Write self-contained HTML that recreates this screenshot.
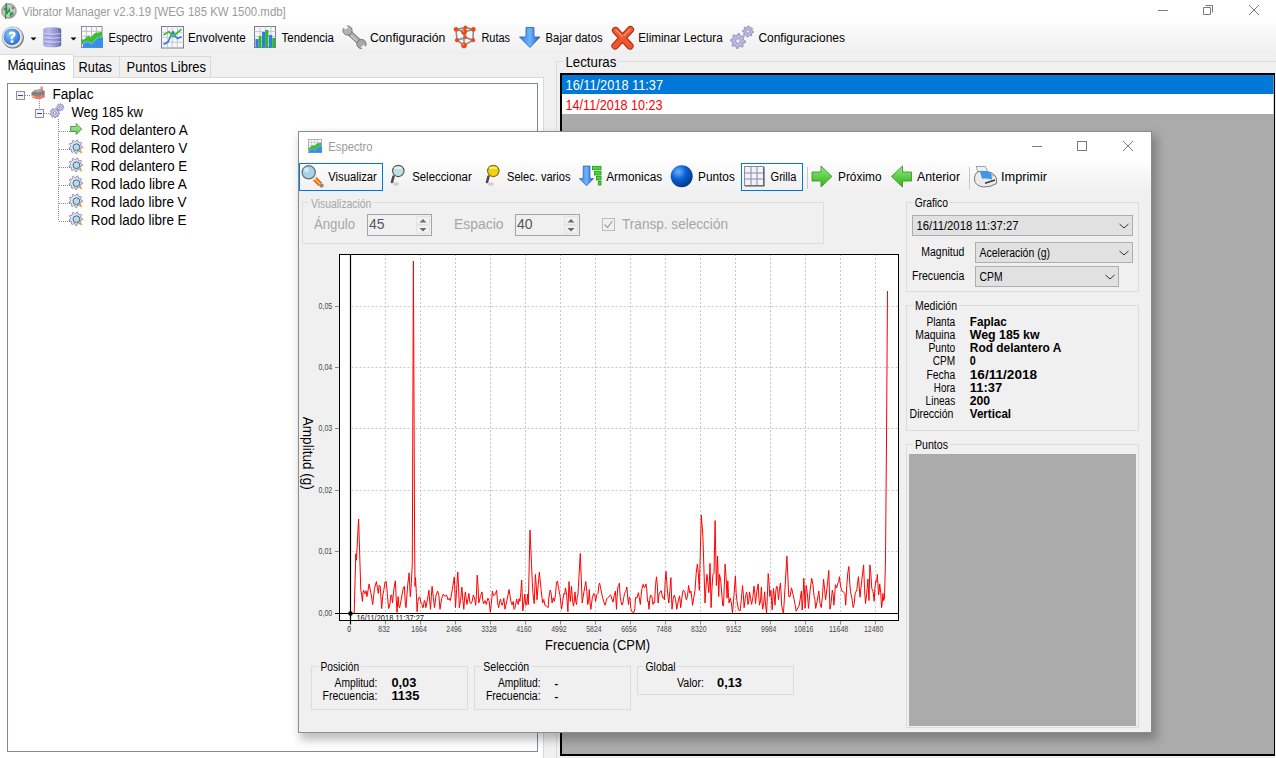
<!DOCTYPE html><html><head><meta charset="utf-8"><style>html,body{margin:0;padding:0;width:1276px;height:758px;overflow:hidden;background:#f0f0f0;position:relative}</style></head><body><svg width="1276" height="758" viewBox="0 0 1276 758" style="position:absolute;left:0;top:0;font-family:'Liberation Sans', sans-serif">
<defs>
<linearGradient id="tbg" x1="0" y1="0" x2="0" y2="1"><stop offset="0" stop-color="#fcfcfc"/><stop offset="1" stop-color="#efefef"/></linearGradient>
<linearGradient id="dtbg" x1="0" y1="0" x2="0" y2="1"><stop offset="0" stop-color="#fdfdfd"/><stop offset="1" stop-color="#efefef"/></linearGradient>
<filter id="shadow" x="-5%" y="-5%" width="110%" height="110%"><feGaussianBlur stdDeviation="5"/></filter>
<radialGradient id="sph" cx="0.35" cy="0.3" r="0.7"><stop offset="0" stop-color="#6fb3ff"/><stop offset="0.5" stop-color="#0a5fd8"/><stop offset="1" stop-color="#033a8c"/></radialGradient>
<radialGradient id="help" cx="0.4" cy="0.35" r="0.65"><stop offset="0" stop-color="#8cc8ff"/><stop offset="1" stop-color="#2a6fd0"/></radialGradient>
<linearGradient id="db" x1="0" y1="0" x2="1" y2="0"><stop offset="0" stop-color="#a8a8e0"/><stop offset="0.35" stop-color="#b8b8ec"/><stop offset="0.8" stop-color="#8888c8"/><stop offset="1" stop-color="#5a5aa0"/></linearGradient>
<linearGradient id="garrow" x1="0" y1="0" x2="0" y2="1"><stop offset="0" stop-color="#8ff07a"/><stop offset="1" stop-color="#2fae1e"/></linearGradient><linearGradient id="garrow2" x1="0" y1="0" x2="0" y2="1"><stop offset="0" stop-color="#b0f4a0"/><stop offset="1" stop-color="#60c850"/></linearGradient>
<linearGradient id="barrow" x1="0" y1="0" x2="1" y2="0"><stop offset="0" stop-color="#2a7fe0"/><stop offset="0.5" stop-color="#6bb4ff"/><stop offset="1" stop-color="#1b5fc0"/></linearGradient>
</defs>
<rect x="0" y="0" width="1276" height="758" fill="#f0f0f0" />
<rect x="0" y="0" width="1276" height="23" fill="#ffffff" />
<g><circle cx="8.9" cy="11" r="7.9" fill="#a8a8a8"/><circle cx="8.9" cy="11" r="6.2" fill="#c8c8c8"/><circle cx="5" cy="9" r="1.6" fill="#7a7a7a"/><circle cx="13" cy="8" r="1.4" fill="#808080"/><circle cx="11" cy="16" r="1.5" fill="#8a8a8a"/><circle cx="9" cy="12" r="2" fill="#f2f2f2"/><path d="M5.5,19 L6.3,3 L7.2,14 L9.3,9.3 L10.5,15 L12.2,12.5 L13.5,15.5" fill="none" stroke="#159a3a" stroke-width="1.2"/></g>
<text x="22.3" y="15.7" font-size="12" fill="#9b9b9b" font-weight="normal" text-anchor="start" textLength="263.5" lengthAdjust="spacingAndGlyphs" >Vibrator Manager v2.3.19 [WEG 185 KW 1500.mdb]</text>
<line x1="1158" y1="10.5" x2="1168" y2="10.5" stroke="#7a7a7a" stroke-width="1" />
<path d="M1205.5,5.5 H1212.5 V12.5 M1203.5,7.5 H1210.5 V14.5 H1203.5 Z" fill="none" stroke="#7a7a7a" stroke-width="1"/>
<path d="M1249,5 L1259,15 M1259,5 L1249,15" stroke="#7a7a7a" stroke-width="1"/>
<rect x="0" y="23" width="1276" height="31" fill="url(#tbg)" />
<g><circle cx="12.9" cy="37.6" r="10.9" fill="#6a6a6a"/><circle cx="12.4" cy="37.1" r="10.6" fill="#c8c8c8"/><circle cx="12.2" cy="36.9" r="9.4" fill="#f2f2f2"/><circle cx="11.9" cy="36.8" r="8.4" fill="url(#help)"/><path d="M8.8,34.3 Q9,31.6 12.2,31.6 Q15.6,31.7 15.6,34.4 Q15.5,36.4 13.2,37.3 L13.2,39.3 L10.8,39.3 L10.8,36.3 Q13,35.6 13,34.4 Q12.8,33.6 12,33.7 Q11.2,33.8 11.2,34.8 Z" fill="#ffffff"/><rect x="10.6" y="40.4" width="2.8" height="2.3" fill="#ffffff"/></g>
<path d="M30.5,37.5 H36.5 L33.5,40.5 Z" fill="#000"/>
<g><path d="M43.2,29.5 Q43.2,27.2 52,27.2 Q61.2,27.2 61.2,29.5 V45 Q61.2,47.3 52,47.3 Q43.2,47.3 43.2,45 Z" fill="url(#db)"/><path d="M44,33.6 Q52,35.2 60.5,33.6 M44,37.6 Q52,39.2 60.5,37.6 M44,41.6 Q52,43.2 60.5,41.6" stroke="#d8d8f8" fill="none" stroke-width="0.9"/><path d="M44,35 Q52,36.6 60.5,35 M44,39 Q52,40.6 60.5,39 M44,43 Q52,44.6 60.5,43" stroke="#8a8ac8" fill="none" stroke-width="0.7"/></g>
<path d="M70.5,37.5 H76.5 L73.5,40.5 Z" fill="#000"/>
<g transform="translate(81,26) scale(1.0)"><rect x="0.5" y="0.5" width="20.5" height="21" fill="#fafaff" stroke="#8a8a98"/><path d="M5.3,0.5 V21.5 M10.5,0.5 V21.5 M15.4,0.5 V21.5 M0.5,5.3 H21 M0.5,10.2 H21" stroke="#b4b4c4" stroke-width="0.9"/><path d="M0.8,12.2 L2.3,14 L7.3,9.5 L9.8,11.5 L13.8,7 L19.8,6 L21,6 V18 H0.8 Z" fill="#3cc02a"/><path d="M1.8,17.5 L6.8,15.5 L10.8,17.8 L14.8,13 L18.8,11 L22,11 V21.7 H1.8 Z" fill="#3a8ee6"/><path d="M1.8,17.5 L6.8,15.5 L10.8,17.8 L14.8,13 L18.8,11 L22,11" fill="none" stroke="#8ec6ff" stroke-width="0.8"/></g>
<text x="108.5" y="41.6" font-size="12" fill="#000" font-weight="normal" text-anchor="start" textLength="44" lengthAdjust="spacingAndGlyphs" >Espectro</text>
<g><rect x="161.5" y="26.5" width="22" height="21.5" fill="#f6f6fc" stroke="#7a7a90"/><path d="M167.5,26.5 V48 M172.2,26.5 V48 M177.4,26.5 V48 M161.5,32.3 H183.5 M161.5,37.4 H183.5 M161.5,42.2 H183.5" stroke="#c4c4d4" stroke-width="0.9"/><path d="M163.5,44.5 L168,42 L170,37.5 L173,31.5 L175,36 L177.5,38.5 L181.5,36.8" fill="none" stroke="#2a78e0" stroke-width="1.6" stroke-linejoin="round"/><path d="M163.5,35 L169,31.6 L173,36.5 L181.5,29.2" fill="none" stroke="#3cbc24" stroke-width="1.7" stroke-linejoin="round"/></g>
<text x="188" y="41.6" font-size="12" fill="#000" font-weight="normal" text-anchor="start" textLength="57.8" lengthAdjust="spacingAndGlyphs" >Envolvente</text>
<g><rect x="254.5" y="26.5" width="21" height="21" fill="#f6f6fc" stroke="#7a7a90"/><path d="M260,26.5 V47.5 M265.5,26.5 V47.5 M271,26.5 V47.5 M254.5,31.5 H275.5 M254.5,36.5 H275.5 M254.5,41.5 H275.5" stroke="#c4c4d4" stroke-width="0.9"/><rect x="255.5" y="39" width="3.2" height="8.5" fill="#2f7ee8"/><rect x="258.7" y="36.2" width="2.8" height="11.3" fill="#2eb82a"/><rect x="262" y="32" width="3.2" height="15.5" fill="#2f7ee8"/><rect x="265.2" y="30" width="3.2" height="17.5" fill="#2eb82a"/><rect x="269" y="35" width="3.2" height="12.5" fill="#2f7ee8"/><rect x="272.2" y="38" width="3" height="9.5" fill="#2eb82a"/></g>
<text x="281.6" y="41.6" font-size="12" fill="#000" font-weight="normal" text-anchor="start" textLength="52.4" lengthAdjust="spacingAndGlyphs" >Tendencia</text>
<g><line x1="348" y1="31.5" x2="361" y2="43.5" stroke="#6e6e6e" stroke-width="5.6" stroke-linecap="round"/><line x1="348" y1="31.5" x2="361" y2="43.5" stroke="#b2b2b2" stroke-width="3.8" stroke-linecap="round"/><circle cx="347.5" cy="30.5" r="4.6" fill="#b2b2b2" stroke="#6e6e6e" stroke-width="0.9"/><circle cx="361.5" cy="44" r="4.6" fill="#a8a8a8" stroke="#6e6e6e" stroke-width="0.9"/><path d="M342.5,27.5 L345.8,29.6 L348.4,26.9 L345.6,24.8 Z" fill="#f6f6f6"/><path d="M366.5,47 L363.3,44.8 L360.8,47.6 L363.2,49.6 Z" fill="#f0f0f0"/><line x1="351" y1="36" x2="357" y2="41" stroke="#f4f4f4" stroke-width="0.7"/></g>
<text x="370" y="41.6" font-size="12" fill="#000" font-weight="normal" text-anchor="start" textLength="75.4" lengthAdjust="spacingAndGlyphs" >Configuración</text>
<g><path d="M456,29.4 L465.4,27.5 L473.4,29.4 L464,31.8 Z M457,40.2 L465.4,37.4 L473,40.2 L464,45.4 Z M456,29.4 L457,40.2 M465.4,27.5 L465.4,37.4 M473.4,29.4 L473,40.2 M464,31.8 L464,45.4" fill="none" stroke="#8c8c8c" stroke-width="1.6"/><g fill="#f04a12"><circle cx="456" cy="29.4" r="2.3"/><circle cx="465.4" cy="27.5" r="2"/><circle cx="473.4" cy="29.4" r="2.3"/><circle cx="465.4" cy="37.4" r="1.7"/><circle cx="457" cy="40.2" r="2.1"/><circle cx="473" cy="40.2" r="2.1"/><circle cx="464" cy="31.8" r="2.9"/><circle cx="464" cy="45.4" r="2.8"/></g><g fill="#ff9a70"><circle cx="463.2" cy="30.8" r="0.9"/><circle cx="463.2" cy="44.4" r="0.9"/></g></g>
<text x="481.4" y="41.6" font-size="12" fill="#000" font-weight="normal" text-anchor="start" textLength="28.7" lengthAdjust="spacingAndGlyphs" >Rutas</text>
<path d="M526,27.5 H534 V37 H540 L530,47.5 L519.5,37 H526 Z" fill="url(#barrow)" stroke="#2a5ca8" stroke-width="0.8"/>
<text x="545.6" y="41.6" font-size="12" fill="#000" font-weight="normal" text-anchor="start" textLength="57" lengthAdjust="spacingAndGlyphs" >Bajar datos</text>
<g stroke-linecap="round"><path d="M615.5,30.5 L630,46 M630.5,29.5 L615,46" stroke="#a02a10" stroke-width="7.2"/><path d="M615.5,30.5 L630,46 M630.5,29.5 L615,46" stroke="#f2552a" stroke-width="5.4"/><path d="M616,30 L622,36.5 M630,29.5 L624,35.5" stroke="#ff9070" stroke-width="1.5"/></g>
<text x="638.3" y="41.6" font-size="12" fill="#000" font-weight="normal" text-anchor="start" textLength="84.4" lengthAdjust="spacingAndGlyphs" >Eliminar Lectura</text>
<g><polygon points="753.50,31.50 753.39,32.57 751.81,33.08 751.43,33.79 751.89,35.39 751.06,36.07 749.58,35.31 748.80,35.55 748.00,37.00 746.93,36.89 746.42,35.31 745.71,34.93 744.11,35.39 743.43,34.56 744.19,33.08 743.95,32.30 742.50,31.50 742.61,30.43 744.19,29.92 744.57,29.21 744.11,27.61 744.94,26.93 746.42,27.69 747.20,27.45 748.00,26.00 749.07,26.11 749.58,27.69 750.29,28.07 751.89,27.61 752.57,28.44 751.81,29.92 752.05,30.70" fill="#b8b8dc" stroke="#7878a8" stroke-width="0.7"/><circle cx="748" cy="31.5" r="1.65" fill="#ececf6" stroke="#7878a8" stroke-width="0.6"/><polygon points="745.50,41.00 745.36,42.46 743.20,43.15 742.68,44.13 743.30,46.30 742.17,47.24 740.15,46.20 739.10,46.52 738.00,48.50 736.54,48.36 735.85,46.20 734.87,45.68 732.70,46.30 731.76,45.17 732.80,43.15 732.48,42.10 730.50,41.00 730.64,39.54 732.80,38.85 733.32,37.87 732.70,35.70 733.83,34.76 735.85,35.80 736.90,35.48 738.00,33.50 739.46,33.64 740.15,35.80 741.13,36.32 743.30,35.70 744.24,36.83 743.20,38.85 743.52,39.90" fill="#b8b8dc" stroke="#7878a8" stroke-width="0.7"/><circle cx="738" cy="41" r="2.25" fill="#ececf6" stroke="#7878a8" stroke-width="0.6"/></g>
<text x="758.4" y="41.6" font-size="12" fill="#000" font-weight="normal" text-anchor="start" textLength="86.6" lengthAdjust="spacingAndGlyphs" >Configuraciones</text>
<rect x="0" y="77" width="543.5" height="681" fill="#ffffff" />
<line x1="543.5" y1="77" x2="543.5" y2="758" stroke="#d9d9d9" stroke-width="1" />
<line x1="0" y1="77.5" x2="543.5" y2="77.5" stroke="#d9d9d9" stroke-width="1" />
<rect x="73.5" y="56.5" width="46" height="21" fill="#f0f0f0" stroke="#d9d9d9" stroke-width="1" />
<rect x="119.5" y="56.5" width="91" height="21" fill="#f0f0f0" stroke="#d9d9d9" stroke-width="1" />
<rect x="0" y="54" width="73" height="24" fill="#ffffff" />
<path d="M-1,54.5 H73.5 V78" fill="none" stroke="#d9d9d9" stroke-width="1"/>
<rect x="0" y="77" width="73" height="2" fill="#ffffff" />
<text x="7.4" y="69.8" font-size="14" fill="#000" font-weight="normal" text-anchor="start" textLength="58" lengthAdjust="spacingAndGlyphs" >Máquinas</text>
<text x="78.6" y="71.8" font-size="14" fill="#000" font-weight="normal" text-anchor="start" textLength="33.4" lengthAdjust="spacingAndGlyphs" >Rutas</text>
<text x="126.5" y="71.8" font-size="14" fill="#000" font-weight="normal" text-anchor="start" textLength="79.5" lengthAdjust="spacingAndGlyphs" >Puntos Libres</text>
<rect x="7.5" y="83.5" width="530" height="668" fill="#ffffff" stroke="#828790" stroke-width="1" />
<rect x="16.5" y="91.5" width="8" height="8" fill="#f4f4f4" stroke="#919191"/><line x1="18" y1="95.5" x2="23" y2="95.5" stroke="#2a4aa8" stroke-width="1"/>
<line x1="25" y1="95.5" x2="31" y2="95.5" stroke="#8a8a8a" stroke-width="1" stroke-dasharray="1,1"/>
<g><rect x="40.6" y="86.4" width="2.1" height="4.5" fill="#f07a70"/><path d="M31.3,93 L34.5,90 L40,89.3 L44.6,90.8 L44.6,97.3 L39.5,99.5 L32,97.8 Z" fill="#7e7e7e"/><path d="M32.5,91.5 L35,90.2 L40,89.8 L43.5,91 L38,92.5 Z" fill="#a8a8a8"/><path d="M32,95 L33.5,96 L35,94.5 L36.5,97 L38.5,94.5 L39.5,97.5 L41.5,93.5 L42.5,96 L44.5,93.5 L44.5,97.3 L39.5,99.3 L32,97.6 Z" fill="#f87a70"/><path d="M32,95.2 L34.5,96.5 L34,98 L32,97.5 Z" fill="#ffb080"/></g>
<text x="52.4" y="98.9" font-size="14" fill="#000" font-weight="normal" text-anchor="start" textLength="41.1" lengthAdjust="spacingAndGlyphs" >Faplac</text>
<line x1="39.5" y1="101" x2="39.5" y2="109" stroke="#8a8a8a" stroke-width="1" stroke-dasharray="1,1"/>
<rect x="35.5" y="109.5" width="8" height="8" fill="#f4f4f4" stroke="#919191"/><line x1="37" y1="113.5" x2="42" y2="113.5" stroke="#2a4aa8" stroke-width="1"/>
<line x1="44" y1="113.5" x2="50" y2="113.5" stroke="#8a8a8a" stroke-width="1" stroke-dasharray="1,1"/>
<g><polygon points="63.90,107.30 63.83,108.00 62.79,108.33 62.54,108.80 62.85,109.85 62.30,110.29 61.33,109.79 60.83,109.95 60.30,110.90 59.60,110.83 59.27,109.79 58.80,109.54 57.75,109.85 57.31,109.30 57.81,108.33 57.65,107.83 56.70,107.30 56.77,106.60 57.81,106.27 58.06,105.80 57.75,104.75 58.30,104.31 59.27,104.81 59.77,104.65 60.30,103.70 61.00,103.77 61.33,104.81 61.80,105.06 62.85,104.75 63.29,105.30 62.79,106.27 62.95,106.77" fill="#d0d0f0" stroke="#6a6aa0" stroke-width="0.7"/><circle cx="60.3" cy="107.3" r="1.08" fill="#ececf6" stroke="#6a6aa0" stroke-width="0.6"/><polygon points="59.60,113.00 59.53,113.83 58.18,114.23 57.92,114.80 58.48,116.09 57.89,116.68 56.60,116.12 56.03,116.38 55.63,117.73 54.80,117.80 54.17,116.55 53.57,116.38 52.40,117.16 51.71,116.68 52.04,115.31 51.68,114.80 50.29,114.64 50.07,113.83 51.20,113.00 51.25,112.37 50.29,111.36 50.64,110.60 52.04,110.69 52.49,110.24 52.40,108.84 53.16,108.49 54.17,109.45 54.80,109.40 55.63,108.27 56.44,108.49 56.60,109.88 57.11,110.24 58.48,109.91 58.96,110.60 58.18,111.77 58.35,112.37" fill="#c8c8ec" stroke="#6a6aa0" stroke-width="0.7"/><circle cx="54.8" cy="113" r="1.44" fill="#ececf6" stroke="#6a6aa0" stroke-width="0.6"/></g>
<text x="71.5" y="116.8" font-size="14" fill="#000" font-weight="normal" text-anchor="start" textLength="71.4" lengthAdjust="spacingAndGlyphs" >Weg 185 kw</text>
<line x1="58.5" y1="119" x2="58.5" y2="220" stroke="#8a8a8a" stroke-width="1" stroke-dasharray="1,1"/>
<line x1="59" y1="131.5" x2="70" y2="131.5" stroke="#8a8a8a" stroke-width="1" stroke-dasharray="1,1"/>
<path d="M70.6,126.5 H76.2 V123.5 L81.7,129.0 L76.2,134.5 V131.5 H70.6 Z" fill="url(#garrow2)" stroke="#4a7a40" stroke-width="0.8"/>
<text x="90.8" y="134.8" font-size="14" fill="#000" font-weight="normal" text-anchor="start" textLength="97.1" lengthAdjust="spacingAndGlyphs" >Rod delantero A</text>
<line x1="59" y1="149.5" x2="70" y2="149.5" stroke="#8a8a8a" stroke-width="1" stroke-dasharray="1,1"/>
<g><polygon points="82.50,146.70 82.40,147.88 80.49,148.44 80.12,149.25 80.91,151.07 80.07,151.91 78.25,151.12 77.44,151.49 76.88,153.40 75.70,153.50 74.81,151.72 73.96,151.49 72.30,152.59 71.33,151.91 71.79,149.98 71.28,149.25 69.31,149.03 69.00,147.88 70.60,146.70 70.68,145.81 69.31,144.37 69.81,143.30 71.79,143.42 72.42,142.79 72.30,140.81 73.37,140.31 74.81,141.68 75.70,141.60 76.88,140.00 78.03,140.31 78.25,142.28 78.98,142.79 80.91,142.33 81.59,143.30 80.49,144.96 80.72,145.81" fill="#e4e4f4" stroke="#6a6a90" stroke-width="0.7"/><circle cx="75.7" cy="146.7" r="2.04" fill="#ececf6" stroke="#6a6a90" stroke-width="0.6"/><circle cx="76.4" cy="147.2" r="3.4" fill="#a8e0f8" stroke="#606070" stroke-width="1"/><line x1="79" y1="150.3" x2="81.8" y2="152.9" stroke="#f0a030" stroke-width="1.7"/></g>
<text x="90.8" y="152.8" font-size="14" fill="#000" font-weight="normal" text-anchor="start" textLength="96.6" lengthAdjust="spacingAndGlyphs" >Rod delantero V</text>
<line x1="59" y1="167.5" x2="70" y2="167.5" stroke="#8a8a8a" stroke-width="1" stroke-dasharray="1,1"/>
<g><polygon points="82.50,164.70 82.40,165.88 80.49,166.44 80.12,167.25 80.91,169.07 80.07,169.91 78.25,169.12 77.44,169.49 76.88,171.40 75.70,171.50 74.81,169.72 73.96,169.49 72.30,170.59 71.33,169.91 71.79,167.98 71.28,167.25 69.31,167.03 69.00,165.88 70.60,164.70 70.68,163.81 69.31,162.37 69.81,161.30 71.79,161.42 72.42,160.79 72.30,158.81 73.37,158.31 74.81,159.68 75.70,159.60 76.88,158.00 78.03,158.31 78.25,160.28 78.98,160.79 80.91,160.33 81.59,161.30 80.49,162.96 80.72,163.81" fill="#e4e4f4" stroke="#6a6a90" stroke-width="0.7"/><circle cx="75.7" cy="164.7" r="2.04" fill="#ececf6" stroke="#6a6a90" stroke-width="0.6"/><circle cx="76.4" cy="165.2" r="3.4" fill="#a8e0f8" stroke="#606070" stroke-width="1"/><line x1="79" y1="168.3" x2="81.8" y2="170.9" stroke="#f0a030" stroke-width="1.7"/></g>
<text x="90.8" y="170.8" font-size="14" fill="#000" font-weight="normal" text-anchor="start" textLength="96.4" lengthAdjust="spacingAndGlyphs" >Rod delantero E</text>
<line x1="59" y1="185.5" x2="70" y2="185.5" stroke="#8a8a8a" stroke-width="1" stroke-dasharray="1,1"/>
<g><polygon points="82.50,182.70 82.40,183.88 80.49,184.44 80.12,185.25 80.91,187.07 80.07,187.91 78.25,187.12 77.44,187.49 76.88,189.40 75.70,189.50 74.81,187.72 73.96,187.49 72.30,188.59 71.33,187.91 71.79,185.98 71.28,185.25 69.31,185.03 69.00,183.88 70.60,182.70 70.68,181.81 69.31,180.37 69.81,179.30 71.79,179.42 72.42,178.79 72.30,176.81 73.37,176.31 74.81,177.68 75.70,177.60 76.88,176.00 78.03,176.31 78.25,178.28 78.98,178.79 80.91,178.33 81.59,179.30 80.49,180.96 80.72,181.81" fill="#e4e4f4" stroke="#6a6a90" stroke-width="0.7"/><circle cx="75.7" cy="182.7" r="2.04" fill="#ececf6" stroke="#6a6a90" stroke-width="0.6"/><circle cx="76.4" cy="183.2" r="3.4" fill="#a8e0f8" stroke="#606070" stroke-width="1"/><line x1="79" y1="186.3" x2="81.8" y2="188.9" stroke="#f0a030" stroke-width="1.7"/></g>
<text x="90.8" y="188.8" font-size="14" fill="#000" font-weight="normal" text-anchor="start" textLength="96.0" lengthAdjust="spacingAndGlyphs" >Rod lado libre A</text>
<line x1="59" y1="203.5" x2="70" y2="203.5" stroke="#8a8a8a" stroke-width="1" stroke-dasharray="1,1"/>
<g><polygon points="82.50,200.70 82.40,201.88 80.49,202.44 80.12,203.25 80.91,205.07 80.07,205.91 78.25,205.12 77.44,205.49 76.88,207.40 75.70,207.50 74.81,205.72 73.96,205.49 72.30,206.59 71.33,205.91 71.79,203.98 71.28,203.25 69.31,203.03 69.00,201.88 70.60,200.70 70.68,199.81 69.31,198.37 69.81,197.30 71.79,197.42 72.42,196.79 72.30,194.81 73.37,194.31 74.81,195.68 75.70,195.60 76.88,194.00 78.03,194.31 78.25,196.28 78.98,196.79 80.91,196.33 81.59,197.30 80.49,198.96 80.72,199.81" fill="#e4e4f4" stroke="#6a6a90" stroke-width="0.7"/><circle cx="75.7" cy="200.7" r="2.04" fill="#ececf6" stroke="#6a6a90" stroke-width="0.6"/><circle cx="76.4" cy="201.2" r="3.4" fill="#a8e0f8" stroke="#606070" stroke-width="1"/><line x1="79" y1="204.3" x2="81.8" y2="206.9" stroke="#f0a030" stroke-width="1.7"/></g>
<text x="90.8" y="206.8" font-size="14" fill="#000" font-weight="normal" text-anchor="start" textLength="95.8" lengthAdjust="spacingAndGlyphs" >Rod lado libre V</text>
<line x1="59" y1="221.5" x2="70" y2="221.5" stroke="#8a8a8a" stroke-width="1" stroke-dasharray="1,1"/>
<g><polygon points="82.50,218.70 82.40,219.88 80.49,220.44 80.12,221.25 80.91,223.07 80.07,223.91 78.25,223.12 77.44,223.49 76.88,225.40 75.70,225.50 74.81,223.72 73.96,223.49 72.30,224.59 71.33,223.91 71.79,221.98 71.28,221.25 69.31,221.03 69.00,219.88 70.60,218.70 70.68,217.81 69.31,216.37 69.81,215.30 71.79,215.42 72.42,214.79 72.30,212.81 73.37,212.31 74.81,213.68 75.70,213.60 76.88,212.00 78.03,212.31 78.25,214.28 78.98,214.79 80.91,214.33 81.59,215.30 80.49,216.96 80.72,217.81" fill="#e4e4f4" stroke="#6a6a90" stroke-width="0.7"/><circle cx="75.7" cy="218.7" r="2.04" fill="#ececf6" stroke="#6a6a90" stroke-width="0.6"/><circle cx="76.4" cy="219.2" r="3.4" fill="#a8e0f8" stroke="#606070" stroke-width="1"/><line x1="79" y1="222.3" x2="81.8" y2="224.9" stroke="#f0a030" stroke-width="1.7"/></g>
<text x="90.8" y="224.8" font-size="14" fill="#000" font-weight="normal" text-anchor="start" textLength="95.8" lengthAdjust="spacingAndGlyphs" >Rod lado libre E</text>
<path d="M563,61.5 H556.5 V758 M618,61.5 H1276" fill="none" stroke="#dcdcdc" stroke-width="1"/>
<text x="565.4" y="66.9" font-size="14" fill="#000" font-weight="normal" text-anchor="start" textLength="51" lengthAdjust="spacingAndGlyphs" >Lecturas</text>
<rect x="560" y="73" width="715" height="683" fill="#000000" />
<rect x="562" y="75" width="712" height="679" fill="#ababab" />
<rect x="562" y="75" width="711.5" height="19" fill="#0078d7" />
<rect x="562" y="94" width="711.5" height="20" fill="#ffffff" />
<text x="565.6" y="90" font-size="14.5" fill="#ffffff" font-weight="normal" text-anchor="start" textLength="97.4" lengthAdjust="spacingAndGlyphs" >16/11/2018 11:37</text>
<text x="565.6" y="109.6" font-size="14.5" fill="#ff0000" font-weight="normal" text-anchor="start" textLength="97" lengthAdjust="spacingAndGlyphs" >14/11/2018 10:23</text>
<rect x="300" y="135" width="857" height="605" fill="#000" opacity="0.25" filter="url(#shadow)"/>
<rect x="298" y="131" width="854" height="602" fill="#f0f0f0" />
<rect x="298.5" y="131.5" width="853" height="601" fill="none" stroke="#8c8c8c" stroke-width="1" />
<rect x="299" y="132" width="852" height="30" fill="#ffffff" />
<g transform="translate(308,139) scale(0.6363636363636364)"><rect x="0.5" y="0.5" width="20.5" height="21" fill="#fafaff" stroke="#8a8a98"/><path d="M5.3,0.5 V21.5 M10.5,0.5 V21.5 M15.4,0.5 V21.5 M0.5,5.3 H21 M0.5,10.2 H21" stroke="#b4b4c4" stroke-width="0.9"/><path d="M0.8,12.2 L2.3,14 L7.3,9.5 L9.8,11.5 L13.8,7 L19.8,6 L21,6 V18 H0.8 Z" fill="#3cc02a"/><path d="M1.8,17.5 L6.8,15.5 L10.8,17.8 L14.8,13 L18.8,11 L22,11 V21.7 H1.8 Z" fill="#3a8ee6"/><path d="M1.8,17.5 L6.8,15.5 L10.8,17.8 L14.8,13 L18.8,11 L22,11" fill="none" stroke="#8ec6ff" stroke-width="0.8"/></g>
<text x="328.3" y="151.1" font-size="12" fill="#9b9b9b" font-weight="normal" text-anchor="start" textLength="44.3" lengthAdjust="spacingAndGlyphs" >Espectro</text>
<line x1="1032" y1="146.5" x2="1042" y2="146.5" stroke="#7a7a7a" stroke-width="1" />
<rect x="1077.5" y="141.5" width="9" height="9" fill="none" stroke="#7a7a7a" stroke-width="1" />
<path d="M1123,141 L1133,151 M1133,141 L1123,151" stroke="#7a7a7a" stroke-width="1"/>
<rect x="299" y="162" width="852" height="32" fill="url(#dtbg)" />
<rect x="299.5" y="163.5" width="83" height="27" fill="none" stroke="#0078d7" stroke-width="1" />
<rect x="741.5" y="163.5" width="61" height="27" fill="none" stroke="#0078d7" stroke-width="1" />
<line x1="807.5" y1="167" x2="807.5" y2="189" stroke="#c8c8c8" stroke-width="1" />
<line x1="969.5" y1="167" x2="969.5" y2="189" stroke="#c8c8c8" stroke-width="1" />
<g><line x1="314.5" y1="178.5" x2="320.5" y2="184.5" stroke="#e85a10" stroke-width="4.6"/><line x1="314.5" y1="178.5" x2="320.5" y2="184.5" stroke="#ffb040" stroke-width="2"/><circle cx="321.6" cy="185.6" r="2.1" fill="#8a8a8a"/><line x1="313.5" y1="177.5" x2="315" y2="179" stroke="#f4f4f4" stroke-width="3"/><circle cx="308.7" cy="172.3" r="6.6" fill="#a8d2ec" stroke="#6e6e6e" stroke-width="1.3"/><circle cx="306.5" cy="170" r="2.4" fill="#d8f0fc" opacity="0.8"/></g>
<text x="328.3" y="181" font-size="12" fill="#000" font-weight="normal" text-anchor="start" textLength="48.5" lengthAdjust="spacingAndGlyphs" >Visualizar</text>
<g><ellipse cx="396" cy="184" rx="3" ry="1.8" fill="#d0d0d0"/><path d="M393.5,176.5 L392,182" stroke="#4a4a4a" stroke-width="2.6" stroke-linecap="round"/><circle cx="398.3" cy="170.9" r="5.7" fill="#bfe0e2" stroke="#505050" stroke-width="1.1"/><rect x="394" y="167" width="8" height="2" fill="#e8f6f6" opacity="0.7"/></g>
<text x="412.2" y="181" font-size="12" fill="#000" font-weight="normal" text-anchor="start" textLength="59.5" lengthAdjust="spacingAndGlyphs" >Seleccionar</text>
<g><ellipse cx="491" cy="184" rx="3" ry="1.8" fill="#d0d0d0"/><path d="M488.5,176.5 L487,182" stroke="#4a4a4a" stroke-width="2.6" stroke-linecap="round"/><circle cx="493.3" cy="170.9" r="5.7" fill="#f0d010" stroke="#7a6a10" stroke-width="1.1"/><rect x="489" y="167" width="8" height="2" fill="#fff6a0" opacity="0.7"/></g>
<text x="507" y="181" font-size="12" fill="#000" font-weight="normal" text-anchor="start" textLength="63.5" lengthAdjust="spacingAndGlyphs" >Selec. varios</text>
<g><path d="M583.2,166 H590 V178.6 H593.6 L586.5,185.8 L579.4,178.6 H583.2 Z" fill="url(#barrow)" stroke="#2a5ca8" stroke-width="0.7"/><g fill="#50d040" stroke="#1a9a10" stroke-width="0.8"><rect x="592.5" y="166.3" width="8.5" height="3.5"/><rect x="594.5" y="171.3" width="6.5" height="3.7"/><rect x="596.5" y="176.3" width="4.5" height="3.7"/><rect x="598.3" y="181.3" width="2.7" height="3.7"/></g></g>
<text x="606.2" y="181" font-size="12" fill="#000" font-weight="normal" text-anchor="start" textLength="56" lengthAdjust="spacingAndGlyphs" >Armonicas</text>
<circle cx="681.7" cy="176.2" r="11" fill="url(#sph)"/>
<text x="698" y="181" font-size="12" fill="#000" font-weight="normal" text-anchor="start" textLength="36.8" lengthAdjust="spacingAndGlyphs" >Puntos</text>
<g><rect x="744.5" y="166.5" width="19" height="19" fill="#f2f2fc" stroke="#8a8aa0"/><path d="M751,166.5 V185.5 M757,166.5 V185.5 M744.5,173 H763.5 M744.5,179 H763.5" stroke="#8a8aa0" stroke-width="1"/><path d="M764,167 V186 H745" stroke="#555" stroke-width="1.2" fill="none"/></g>
<text x="770.5" y="181" font-size="12" fill="#000" font-weight="normal" text-anchor="start" textLength="25.9" lengthAdjust="spacingAndGlyphs" >Grilla</text>
<path d="M812,172 H821 V166 L832,176.5 L821,187 V181 H812 Z" fill="url(#garrow)" stroke="#3a8a20" stroke-width="0.8"/>
<text x="838" y="181" font-size="12" fill="#000" font-weight="normal" text-anchor="start" textLength="43.5" lengthAdjust="spacingAndGlyphs" >Próximo</text>
<path d="M911.5,172 H902.5 V166 L891.5,176.5 L902.5,187 V181 H911.5 Z" fill="url(#garrow)" stroke="#3a8a20" stroke-width="0.8"/>
<text x="917" y="181" font-size="12" fill="#000" font-weight="normal" text-anchor="start" textLength="43" lengthAdjust="spacingAndGlyphs" >Anterior</text>
<g><path d="M976.2,166.5 H985.5 L987.5,171.5 L978,172.5 Z" fill="#e4f4ff" stroke="#8a8a8a" stroke-width="0.8"/><path d="M974.5,179 Q974.5,171.5 981,171.2 L990,172.2 Q996.3,174.5 996.6,180 L996.6,183.5 Q990,187.6 983,187 Q975,185.5 974.5,180 Z" fill="#ebebeb" stroke="#6a6a6a" stroke-width="0.9"/><path d="M980,171.8 Q987,170 991.5,173.5 L992,179.5 Q986,177.8 982,178.8 Z" fill="#3f97ea"/><line x1="985" y1="183.2" x2="995" y2="180" stroke="#3a3a3a" stroke-width="1.5"/><circle cx="993" cy="175.5" r="0.9" fill="#ffa020"/></g>
<text x="1001" y="181" font-size="12" fill="#000" font-weight="normal" text-anchor="start" textLength="46" lengthAdjust="spacingAndGlyphs" >Imprimir</text>
<path d="M309,202.5 H302.5 V243.5 H823.5 V202.5 H373.4" fill="none" stroke="#dcdcdc" stroke-width="1"/>
<text x="311" y="207.5" font-size="12" fill="#a6a6a6" font-weight="normal" text-anchor="start" textLength="60.4" lengthAdjust="spacingAndGlyphs" >Visualización</text>
<text x="314" y="228.8" font-size="14" fill="#a6a6a6" font-weight="normal" text-anchor="start" textLength="41" lengthAdjust="spacingAndGlyphs" >Ángulo</text>
<text x="454" y="228.8" font-size="14" fill="#a6a6a6" font-weight="normal" text-anchor="start" textLength="49.5" lengthAdjust="spacingAndGlyphs" >Espacio</text>
<rect x="367.5" y="214.5" width="64" height="21" fill="#f0f0f0" stroke="#a4a4a4" stroke-width="1" />
<text x="369" y="228.8" font-size="14" fill="#555560" font-weight="normal" text-anchor="start" >45</text>
<rect x="416.5" y="216.5" width="13" height="8" fill="#f0f0f0" stroke="#e3e3e3" stroke-width="1" />
<rect x="416.5" y="225.5" width="13" height="8" fill="#f0f0f0" stroke="#e3e3e3" stroke-width="1" />
<path d="M419.5,222.5 L423,219 L426.5,222.5 Z M419.5,228 L423,231.5 L426.5,228 Z" fill="#6a6a6a"/>
<rect x="515.5" y="214.5" width="64" height="21" fill="#f0f0f0" stroke="#a4a4a4" stroke-width="1" />
<text x="517" y="228.8" font-size="14" fill="#555560" font-weight="normal" text-anchor="start" >40</text>
<rect x="564.5" y="216.5" width="13" height="8" fill="#f0f0f0" stroke="#e3e3e3" stroke-width="1" />
<rect x="564.5" y="225.5" width="13" height="8" fill="#f0f0f0" stroke="#e3e3e3" stroke-width="1" />
<path d="M567.5,222.5 L571,219 L574.5,222.5 Z M567.5,228 L571,231.5 L574.5,228 Z" fill="#6a6a6a"/>
<rect x="602.5" y="218.5" width="12" height="12" fill="#f0f0f0" stroke="#bcbcbc" stroke-width="1" />
<path d="M604.5,224.5 L607.5,227.5 L612.5,221" fill="none" stroke="#a0a0a0" stroke-width="1.2"/>
<text x="622" y="228.8" font-size="14" fill="#a6a6a6" font-weight="normal" text-anchor="start" textLength="106" lengthAdjust="spacingAndGlyphs" >Transp. selección</text>
<rect x="339" y="254" width="560" height="367" fill="#ffffff" />
<line x1="385.5" y1="254" x2="385.5" y2="613.5" stroke="#c8c8c8" stroke-width="1" stroke-dasharray="2,2"/>
<line x1="385.5" y1="621" x2="385.5" y2="624.5" stroke="#8a8a8a" stroke-width="1" />
<line x1="420.5" y1="254" x2="420.5" y2="613.5" stroke="#c8c8c8" stroke-width="1" stroke-dasharray="2,2"/>
<line x1="420.5" y1="621" x2="420.5" y2="624.5" stroke="#8a8a8a" stroke-width="1" />
<line x1="455.5" y1="254" x2="455.5" y2="613.5" stroke="#c8c8c8" stroke-width="1" stroke-dasharray="2,2"/>
<line x1="455.5" y1="621" x2="455.5" y2="624.5" stroke="#8a8a8a" stroke-width="1" />
<line x1="490.5" y1="254" x2="490.5" y2="613.5" stroke="#c8c8c8" stroke-width="1" stroke-dasharray="2,2"/>
<line x1="490.5" y1="621" x2="490.5" y2="624.5" stroke="#8a8a8a" stroke-width="1" />
<line x1="525.5" y1="254" x2="525.5" y2="613.5" stroke="#c8c8c8" stroke-width="1" stroke-dasharray="2,2"/>
<line x1="525.5" y1="621" x2="525.5" y2="624.5" stroke="#8a8a8a" stroke-width="1" />
<line x1="560.5" y1="254" x2="560.5" y2="613.5" stroke="#c8c8c8" stroke-width="1" stroke-dasharray="2,2"/>
<line x1="560.5" y1="621" x2="560.5" y2="624.5" stroke="#8a8a8a" stroke-width="1" />
<line x1="595.5" y1="254" x2="595.5" y2="613.5" stroke="#c8c8c8" stroke-width="1" stroke-dasharray="2,2"/>
<line x1="595.5" y1="621" x2="595.5" y2="624.5" stroke="#8a8a8a" stroke-width="1" />
<line x1="630.5" y1="254" x2="630.5" y2="613.5" stroke="#c8c8c8" stroke-width="1" stroke-dasharray="2,2"/>
<line x1="630.5" y1="621" x2="630.5" y2="624.5" stroke="#8a8a8a" stroke-width="1" />
<line x1="665.5" y1="254" x2="665.5" y2="613.5" stroke="#c8c8c8" stroke-width="1" stroke-dasharray="2,2"/>
<line x1="665.5" y1="621" x2="665.5" y2="624.5" stroke="#8a8a8a" stroke-width="1" />
<line x1="700.5" y1="254" x2="700.5" y2="613.5" stroke="#c8c8c8" stroke-width="1" stroke-dasharray="2,2"/>
<line x1="700.5" y1="621" x2="700.5" y2="624.5" stroke="#8a8a8a" stroke-width="1" />
<line x1="735.5" y1="254" x2="735.5" y2="613.5" stroke="#c8c8c8" stroke-width="1" stroke-dasharray="2,2"/>
<line x1="735.5" y1="621" x2="735.5" y2="624.5" stroke="#8a8a8a" stroke-width="1" />
<line x1="770.5" y1="254" x2="770.5" y2="613.5" stroke="#c8c8c8" stroke-width="1" stroke-dasharray="2,2"/>
<line x1="770.5" y1="621" x2="770.5" y2="624.5" stroke="#8a8a8a" stroke-width="1" />
<line x1="805.5" y1="254" x2="805.5" y2="613.5" stroke="#c8c8c8" stroke-width="1" stroke-dasharray="2,2"/>
<line x1="805.5" y1="621" x2="805.5" y2="624.5" stroke="#8a8a8a" stroke-width="1" />
<line x1="840.5" y1="254" x2="840.5" y2="613.5" stroke="#c8c8c8" stroke-width="1" stroke-dasharray="2,2"/>
<line x1="840.5" y1="621" x2="840.5" y2="624.5" stroke="#8a8a8a" stroke-width="1" />
<line x1="875.5" y1="254" x2="875.5" y2="613.5" stroke="#c8c8c8" stroke-width="1" stroke-dasharray="2,2"/>
<line x1="875.5" y1="621" x2="875.5" y2="624.5" stroke="#8a8a8a" stroke-width="1" />
<line x1="351.5" y1="551.5" x2="898" y2="551.5" stroke="#c8c8c8" stroke-width="1" stroke-dasharray="2,2"/>
<line x1="351.5" y1="490.5" x2="898" y2="490.5" stroke="#c8c8c8" stroke-width="1" stroke-dasharray="2,2"/>
<line x1="351.5" y1="428.5" x2="898" y2="428.5" stroke="#c8c8c8" stroke-width="1" stroke-dasharray="2,2"/>
<line x1="351.5" y1="367.5" x2="898" y2="367.5" stroke="#c8c8c8" stroke-width="1" stroke-dasharray="2,2"/>
<line x1="351.5" y1="306.5" x2="898" y2="306.5" stroke="#c8c8c8" stroke-width="1" stroke-dasharray="2,2"/>
<line x1="335" y1="613.5" x2="339" y2="613.5" stroke="#8a8a8a" stroke-width="1" />
<text x="332.3" y="616.2" font-size="8.8" fill="#4a4a4a" font-weight="normal" text-anchor="end" textLength="13.8" lengthAdjust="spacingAndGlyphs" >0,00</text>
<line x1="335" y1="551.5" x2="339" y2="551.5" stroke="#8a8a8a" stroke-width="1" />
<text x="332.3" y="554.2" font-size="8.8" fill="#4a4a4a" font-weight="normal" text-anchor="end" textLength="13.8" lengthAdjust="spacingAndGlyphs" >0,01</text>
<line x1="335" y1="490.5" x2="339" y2="490.5" stroke="#8a8a8a" stroke-width="1" />
<text x="332.3" y="493.2" font-size="8.8" fill="#4a4a4a" font-weight="normal" text-anchor="end" textLength="13.8" lengthAdjust="spacingAndGlyphs" >0,02</text>
<line x1="335" y1="428.5" x2="339" y2="428.5" stroke="#8a8a8a" stroke-width="1" />
<text x="332.3" y="431.2" font-size="8.8" fill="#4a4a4a" font-weight="normal" text-anchor="end" textLength="13.8" lengthAdjust="spacingAndGlyphs" >0,03</text>
<line x1="335" y1="367.5" x2="339" y2="367.5" stroke="#8a8a8a" stroke-width="1" />
<text x="332.3" y="370.2" font-size="8.8" fill="#4a4a4a" font-weight="normal" text-anchor="end" textLength="13.8" lengthAdjust="spacingAndGlyphs" >0,04</text>
<line x1="335" y1="306.5" x2="339" y2="306.5" stroke="#8a8a8a" stroke-width="1" />
<text x="332.3" y="309.2" font-size="8.8" fill="#4a4a4a" font-weight="normal" text-anchor="end" textLength="13.8" lengthAdjust="spacingAndGlyphs" >0,05</text>
<text x="349.1" y="632.2" font-size="8.8" fill="#222222" font-weight="normal" text-anchor="middle" textLength="3.85" lengthAdjust="spacingAndGlyphs" >0</text>
<text x="384.07000000000005" y="632.2" font-size="8.8" fill="#4a4a4a" font-weight="normal" text-anchor="middle" textLength="11.55" lengthAdjust="spacingAndGlyphs" >832</text>
<text x="419.04" y="632.2" font-size="8.8" fill="#4a4a4a" font-weight="normal" text-anchor="middle" textLength="15.4" lengthAdjust="spacingAndGlyphs" >1664</text>
<text x="454.01" y="632.2" font-size="8.8" fill="#4a4a4a" font-weight="normal" text-anchor="middle" textLength="15.4" lengthAdjust="spacingAndGlyphs" >2496</text>
<text x="488.98" y="632.2" font-size="8.8" fill="#4a4a4a" font-weight="normal" text-anchor="middle" textLength="15.4" lengthAdjust="spacingAndGlyphs" >3328</text>
<text x="523.95" y="632.2" font-size="8.8" fill="#4a4a4a" font-weight="normal" text-anchor="middle" textLength="15.4" lengthAdjust="spacingAndGlyphs" >4160</text>
<text x="558.92" y="632.2" font-size="8.8" fill="#4a4a4a" font-weight="normal" text-anchor="middle" textLength="15.4" lengthAdjust="spacingAndGlyphs" >4992</text>
<text x="593.89" y="632.2" font-size="8.8" fill="#4a4a4a" font-weight="normal" text-anchor="middle" textLength="15.4" lengthAdjust="spacingAndGlyphs" >5824</text>
<text x="628.86" y="632.2" font-size="8.8" fill="#4a4a4a" font-weight="normal" text-anchor="middle" textLength="15.4" lengthAdjust="spacingAndGlyphs" >6656</text>
<text x="663.83" y="632.2" font-size="8.8" fill="#4a4a4a" font-weight="normal" text-anchor="middle" textLength="15.4" lengthAdjust="spacingAndGlyphs" >7488</text>
<text x="698.8000000000001" y="632.2" font-size="8.8" fill="#4a4a4a" font-weight="normal" text-anchor="middle" textLength="15.4" lengthAdjust="spacingAndGlyphs" >8320</text>
<text x="733.77" y="632.2" font-size="8.8" fill="#4a4a4a" font-weight="normal" text-anchor="middle" textLength="15.4" lengthAdjust="spacingAndGlyphs" >9152</text>
<text x="768.74" y="632.2" font-size="8.8" fill="#4a4a4a" font-weight="normal" text-anchor="middle" textLength="15.4" lengthAdjust="spacingAndGlyphs" >9984</text>
<text x="803.71" y="632.2" font-size="8.8" fill="#4a4a4a" font-weight="normal" text-anchor="middle" textLength="19.25" lengthAdjust="spacingAndGlyphs" >10816</text>
<text x="838.68" y="632.2" font-size="8.8" fill="#4a4a4a" font-weight="normal" text-anchor="middle" textLength="19.25" lengthAdjust="spacingAndGlyphs" >11648</text>
<text x="873.65" y="632.2" font-size="8.8" fill="#4a4a4a" font-weight="normal" text-anchor="middle" textLength="19.25" lengthAdjust="spacingAndGlyphs" >12480</text>
<clipPath id="cclip"><rect x="340" y="255" width="558" height="365"/></clipPath>
<g clip-path="url(#cclip)">
<polyline points="354.2,613.2 355.8,553.8 356.4,560.2 358.6,519 360.8,590.3 361.6,594.1 362.4,601.4 363.0,592.4 363.7,590.3 364.5,593.4 365.3,593.4 366.1,590.7 366.9,596.6 368.0,590.7 369.1,584 370.9,592.9 372.7,604.5 374.5,588.6 376.4,581.6 377.4,587.6 378.3,593.4 379.2,585.2 380.2,586.3 380.9,596.7 381.7,608.5 382.8,595.1 383.8,590.3 385.0,581.9 386.2,581.6 387.4,594.3 388.6,608.5 389.8,605.0 390.9,595 391.7,595.2 392.5,603 393.9,589.1 395.4,580.8 396.2,597.9 397,612.4 398.1,596.6 398.9,606.6 399.6,607.7 401.2,599.8 402.8,590.3 403.6,587.3 404.4,586.3 405.2,601.8 406,607.7 407.6,585.8 409.1,572.9 410.3,596.6 411.3,583.6 412.3,563.4 413.4,261 414.6,540 415,586.3 415.5,577.6 416.3,592.5 417.1,611.7 417.9,601.4 418.6,598.2 419.8,596.8 421,603 421.8,603.4 422.6,607.7 423.4,607.3 424.2,600.6 425.0,601.0 425.8,607.7 427.4,599.8 428.9,590.3 429.7,601.2 430.5,609.3 431.3,596.5 432.1,586.3 433.3,597.5 434.5,607.7 436.1,595.0 437.7,591.1 438.9,595.8 440,609.3 441.6,598.8 443.2,594.2 444.8,596.4 446.4,595 447.2,596.7 448,599.8 449.1,598.3 450.3,600.6 452.3,589.6 454.3,576.8 455.5,607.7 456.6,589.4 457.8,572.1 458.6,587.9 459.3,607.7 460.6,600.3 461.9,587.1 462.9,600.2 463.8,609.3 464.6,598.0 465.4,591.9 466.2,598.9 467,604.5 467.9,599.2 468.9,593.4 469.9,602.3 470.9,603.7 472.1,601.6 473.3,595 474.5,598.0 475.7,605.3 476.4,595.1 477.2,575.2 478.0,585.3 478.8,603 480.4,596.6 482,591.9 482.8,600.4 483.6,603.7 485.0,600.6 486.3,604.5 487.1,601.2 487.9,598.2 489.1,600.7 490.3,612.4 491.4,603.4 492.4,591.1 493.5,595.7 494.6,595 495.6,593.4 496.6,590.3 497.6,602.8 498.7,607.7 499.6,601.5 500.6,599 501.4,604.1 502.2,605.3 503.0,602.7 503.8,598.2 505,609.3 507.0,600.2 509,589.5 509.9,595.0 510.9,601.4 512.1,604.8 513.3,601.4 514.0,609.4 514.8,608.5 515.8,603.5 516.7,599 517.5,603.4 518.3,604.5 519.1,598.6 519.9,601.4 520.8,592.7 521.7,580 522.8,610.9 523.8,604.0 524.7,594.2 525.9,605.3 526.7,604.7 527.5,594.2 528.3,604.5 530,530.1 531.5,563.4 532.3,582.4 533.1,595 534.2,603.7 535.4,574.4 536.2,584.9 537,599.8 538.2,584.8 539.4,572.1 541.0,589.2 542.6,603 543.8,599.4 544.9,605.3 546.5,606.1 548.1,607.7 548.8,598.0 549.4,595 550.2,590.0 551,592.7 552.1,603 553.2,597.8 554.4,601.4 555.5,594.6 556.5,582.4 557.5,581.0 558.4,587.1 560.0,595.7 561.6,609.3 562.8,600.3 563.9,593.4 564.7,594.4 565.5,587.9 566.7,595.6 567.9,611.7 569,581.6 569.6,591.0 570.3,601.4 570.9,594.3 571.5,586.3 572.5,600.0 573.4,606.1 574.2,602.2 575,591.9 575.8,601.8 576.6,604.5 577.2,597.5 577.9,595 580.3,553.5 582.2,603 584.0,591.5 585.8,581.6 586.8,591.6 587.7,604.5 588.5,600.8 589.3,589.5 590.1,604.0 590.9,609.3 592.3,597.9 593.7,593.4 594.7,594.2 595.6,601.4 596.8,594.7 598,593.4 598.8,585.6 599.6,583.1 600.8,588.9 602,595 603.5,601.0 605.1,605.3 606.7,599.0 608.3,597.4 610.6,594.8 613,602.2 614.2,595.8 615.4,591.1 616.5,609.3 617.1,596.9 617.8,587.1 618.6,585.8 619.4,583.1 620.2,596.8 621,601.4 621.8,604.9 622.6,604.5 623.5,599.1 624.5,593.4 625.7,591.4 626.9,587.1 627.7,597.6 628.5,604.5 629.2,596.9 630,598.2 630.8,608.5 631.6,610.9 632.8,612.5 634,612.4 634.8,608.6 635.6,597.4 637.0,598.0 638.4,592.7 639.3,597.5 640.3,604.5 641.1,595.6 641.9,588.7 643.1,584.3 644.3,587.9 645.1,587.2 645.9,583.9 646.7,588.3 647.5,601.4 648.2,601.0 649,609.3 649.8,599.2 650.6,595 651.8,596.4 653,604.5 653.8,602.2 654.6,603 655.5,585.4 656.5,576.8 657.3,584.9 658.1,603 659.1,594.0 660.1,591.9 661.3,590.7 662.5,597.4 663.5,597.2 664.4,599.8 665.2,580.8 666,571.3 667.4,590.9 668.8,603 669.8,591.4 670.9,577.6 672,609.3 673.2,598.6 674.4,595 675.6,599.7 676.8,609.3 678.2,601.0 679.6,595.8 680.7,607.7 681.9,597.6 683.1,590.3 684.7,591.3 686.3,599.8 687.5,596.1 688.6,585.5 689.8,593.2 691,591.1 691.8,597.9 692.6,605.3 693.8,597.6 695,590.3 696.2,573.1 697.4,564.1 698.3,573.2 699.3,590.3 701.3,515 702.9,536.4 705,603 706.0,587.1 706.9,574.4 707.8,581.2 708.8,592.7 709.4,581.3 710,563.4 711.1,607.7 712.0,587.7 712.9,574.4 714,573.6 715.1,520.6 716.4,585.5 717.6,556.2 718.7,596.6 719.5,574.4 720.7,579.9 721.9,595 722.7,605.1 723.5,606.1 724.3,585.4 725.1,564.1 726.1,577.6 727.1,598.2 727.8,580.8 728.4,592.3 729,603 730.2,598.3 731.4,603 732.5,613.2 734.0,594.9 735.4,576 736.2,593.5 737,601.4 738.5,609.8 740.1,610.9 741.3,600.2 742.5,585.5 743.3,594.2 744.1,607.7 745.3,598.5 746.5,591.9 747.2,594.9 748,604.5 748.8,600.9 749.6,591.9 750.6,598.5 751.6,604.4 752.8,598.1 754,586.2 754.8,593.2 755.5,603.6 756.9,591.0 758.2,583.9 758.9,597.7 759.5,605.2 760.5,600.9 761.4,587 762.0,601.6 762.7,609.2 763.7,603.6 764.6,591.8 765.6,605.6 766.6,613.1 767.4,595.7 768.2,573.6 769.0,582.3 769.8,596.5 770.9,590.2 771.5,600.3 772.2,610 773.4,588.6 774.2,595.5 775,605.2 775.8,591.0 776.6,586.2 777.5,588.2 778.5,599.7 779.5,589.2 780.4,583.1 781.0,591.3 781.6,604.4 782.5,610.7 783.5,613.1 786.9,556.2 788.8,596.5 790.1,596.7 791.5,587.8 793.3,595.6 795.1,604.4 796.2,611.2 797.2,609.2 799.3,605.0 801.4,591 802.2,610 803.0,598.7 803.8,578.3 804.5,592.0 805.1,608.4 806.2,585.4 807.4,594.1 808.5,608.4 810.1,590.6 811.7,578.3 812.9,584.4 814.1,596.5 814.9,599.5 815.7,608.4 817.2,600.9 818.8,591 820.0,603.3 821.2,607.6 822.4,596.8 823.6,579.1 824.6,589.2 825.6,599.7 827.2,586.6 828.8,570.4 829.9,609.2 831.1,602.7 832.3,590.2 833.1,593.5 833.9,605.2 834.6,596.6 835.4,584.7 836.6,588.0 837.8,583.1 838.6,582.7 839.4,576.7 840.6,586.4 841.8,591 843.3,592.0 844.9,593.4 845.7,605.2 846.8,585.4 847.8,572.7 848.9,566.5 849.7,582.0 850.5,591.8 851.9,598.0 853.2,607.6 854.2,603.5 855.2,593.4 856.8,589.8 858.4,576.7 859.2,586.0 860,597.3 861.8,580.1 863.6,564.9 864.5,588.7 865.5,603.6 866.7,593.6 867.9,579.1 869,600.5 869.9,564.9 870.8,573.5 871.8,588.6 873.0,591.2 874.2,601.3 875.0,587.5 875.8,580.7 876.6,581.6 877.4,574.4 878.5,595 879.1,592.5 879.7,583.9 880.7,592.2 881.6,607.6 882.2,603.8 882.9,593.4 883.7,600.6 884.5,598.1 885.5,560 886.5,440 887.5,291" fill="none" stroke="#ff0000" stroke-width="1" stroke-linejoin="miter" stroke-miterlimit="3"/>
<text x="356.4" y="621.4" font-size="9.6" fill="#111" font-weight="normal" text-anchor="start" textLength="67.6" lengthAdjust="spacingAndGlyphs" >16/11/2018  11:37:27</text>
</g>
<rect x="339.5" y="254.5" width="559" height="366" fill="none" stroke="#000" stroke-width="1" />
<line x1="350.5" y1="254" x2="350.5" y2="624.5" stroke="#000" stroke-width="1.2" />
<line x1="335" y1="613.5" x2="898" y2="613.5" stroke="#000" stroke-width="1.2" />
<circle cx="350.5" cy="613.5" r="2.3" fill="#000"/>
<text x="545" y="649.9" font-size="14" fill="#000" font-weight="normal" text-anchor="start" textLength="105" lengthAdjust="spacingAndGlyphs" >Frecuencia (CPM)</text>
<text x="0" y="0" font-size="14" fill="#000" transform="translate(302.7,416.8) rotate(90)" textLength="73" lengthAdjust="spacingAndGlyphs">Amplitud (g)</text>
<path d="M318.5,666.5 H311.5 V709.5 H467.5 V666.5 H361.1" fill="none" stroke="#dcdcdc" stroke-width="1"/>
<text x="320.5" y="671.3" font-size="12" fill="#000" font-weight="normal" text-anchor="start" textLength="38.6" lengthAdjust="spacingAndGlyphs" >Posición</text>
<text x="377.3" y="687.3" font-size="12" fill="#000" font-weight="normal" text-anchor="end" textLength="42.7" lengthAdjust="spacingAndGlyphs" >Amplitud:</text>
<text x="377.3" y="699.8" font-size="12" fill="#000" font-weight="normal" text-anchor="end" textLength="54.7" lengthAdjust="spacingAndGlyphs" >Frecuencia:</text>
<text x="391.4" y="687.3" font-size="12" fill="#000" font-weight="bold" text-anchor="start" textLength="25" lengthAdjust="spacingAndGlyphs" >0,03</text>
<text x="391.4" y="699.8" font-size="12" fill="#000" font-weight="bold" text-anchor="start" textLength="28" lengthAdjust="spacingAndGlyphs" >1135</text>
<path d="M481.3,666.5 H474.5 V709.5 H630.5 V666.5 H531.2" fill="none" stroke="#dcdcdc" stroke-width="1"/>
<text x="483.3" y="671.3" font-size="12" fill="#000" font-weight="normal" text-anchor="start" textLength="45.9" lengthAdjust="spacingAndGlyphs" >Selección</text>
<text x="540.6" y="687.3" font-size="12" fill="#000" font-weight="normal" text-anchor="end" textLength="42.7" lengthAdjust="spacingAndGlyphs" >Amplitud:</text>
<text x="540.6" y="699.8" font-size="12" fill="#000" font-weight="normal" text-anchor="end" textLength="54.7" lengthAdjust="spacingAndGlyphs" >Frecuencia:</text>
<text x="554.5" y="687.3" font-size="11" fill="#000" font-weight="bold" text-anchor="start" >-</text>
<text x="554.5" y="699.8" font-size="11" fill="#000" font-weight="bold" text-anchor="start" >-</text>
<path d="M643.5,666.5 H637.5 V694.5 H793.5 V666.5 H677.5" fill="none" stroke="#dcdcdc" stroke-width="1"/>
<text x="645.5" y="671.3" font-size="12" fill="#000" font-weight="normal" text-anchor="start" textLength="30" lengthAdjust="spacingAndGlyphs" >Global</text>
<text x="704" y="687.3" font-size="12" fill="#000" font-weight="normal" text-anchor="end" textLength="27" lengthAdjust="spacingAndGlyphs" >Valor:</text>
<text x="717" y="687.3" font-size="12" fill="#000" font-weight="bold" text-anchor="start" textLength="25" lengthAdjust="spacingAndGlyphs" >0,13</text>
<path d="M912.7,202.5 H906.5 V291.5 H1138.5 V202.5 H950.0" fill="none" stroke="#dcdcdc" stroke-width="1"/>
<text x="914.7" y="207.2" font-size="12" fill="#000" font-weight="normal" text-anchor="start" textLength="33.3" lengthAdjust="spacingAndGlyphs" >Grafico</text>
<rect x="912.5" y="215.5" width="220" height="20" fill="#e1e1e1" stroke="#adadad" stroke-width="1" />
<text x="916.5" y="230" font-size="12" fill="#000" font-weight="normal" text-anchor="start" textLength="102" lengthAdjust="spacingAndGlyphs" >16/11/2018 11:37:27</text>
<path d="M1119.5,224 L1124.0,228 L1128.5,224" fill="none" stroke="#333" stroke-width="1"/>
<text x="964.3" y="255.6" font-size="12" fill="#000" font-weight="normal" text-anchor="end" textLength="43" lengthAdjust="spacingAndGlyphs" >Magnitud</text>
<rect x="975.5" y="242.5" width="157" height="20" fill="#e1e1e1" stroke="#adadad" stroke-width="1" />
<text x="979.5" y="257" font-size="12" fill="#000" font-weight="normal" text-anchor="start" textLength="70.5" lengthAdjust="spacingAndGlyphs" >Aceleración (g)</text>
<path d="M1119.5,251 L1124.0,255 L1128.5,251" fill="none" stroke="#333" stroke-width="1"/>
<text x="964.3" y="279.7" font-size="12" fill="#000" font-weight="normal" text-anchor="end" textLength="52.3" lengthAdjust="spacingAndGlyphs" >Frecuencia</text>
<rect x="975.5" y="266.5" width="143" height="20" fill="#e1e1e1" stroke="#adadad" stroke-width="1" />
<text x="979.5" y="281" font-size="12" fill="#000" font-weight="normal" text-anchor="start" textLength="23" lengthAdjust="spacingAndGlyphs" >CPM</text>
<path d="M1105.5,275 L1110.0,279 L1114.5,275" fill="none" stroke="#333" stroke-width="1"/>
<path d="M913,305.5 H906.5 V430.5 H1138.5 V305.5 H959" fill="none" stroke="#dcdcdc" stroke-width="1"/>
<text x="915" y="309.7" font-size="12" fill="#000" font-weight="normal" text-anchor="start" textLength="42" lengthAdjust="spacingAndGlyphs" >Medición</text>
<text x="955.2" y="326.3" font-size="12" fill="#000" font-weight="normal" text-anchor="end" textLength="28.8" lengthAdjust="spacingAndGlyphs" >Planta</text>
<text x="969.8" y="326.3" font-size="12" fill="#000" font-weight="bold" text-anchor="start" textLength="37" lengthAdjust="spacingAndGlyphs" >Faplac</text>
<text x="955.2" y="338.9" font-size="12" fill="#000" font-weight="normal" text-anchor="end" textLength="39.9" lengthAdjust="spacingAndGlyphs" >Maquina</text>
<text x="969.8" y="338.9" font-size="12" fill="#000" font-weight="bold" text-anchor="start" textLength="69.8" lengthAdjust="spacingAndGlyphs" >Weg 185 kw</text>
<text x="955.2" y="352.3" font-size="12" fill="#000" font-weight="normal" text-anchor="end" textLength="26.7" lengthAdjust="spacingAndGlyphs" >Punto</text>
<text x="969.8" y="352.3" font-size="12" fill="#000" font-weight="bold" text-anchor="start" textLength="91.5" lengthAdjust="spacingAndGlyphs" >Rod delantero A</text>
<text x="955.2" y="365.2" font-size="12" fill="#000" font-weight="normal" text-anchor="end" textLength="22.4" lengthAdjust="spacingAndGlyphs" >CPM</text>
<text x="969.8" y="365.2" font-size="12" fill="#000" font-weight="bold" text-anchor="start" textLength="6" lengthAdjust="spacingAndGlyphs" >0</text>
<text x="955.2" y="378.6" font-size="12" fill="#000" font-weight="normal" text-anchor="end" textLength="28.8" lengthAdjust="spacingAndGlyphs" >Fecha</text>
<text x="969.8" y="378.6" font-size="12" fill="#000" font-weight="bold" text-anchor="start" textLength="67.3" lengthAdjust="spacingAndGlyphs" >16/11/2018</text>
<text x="955.2" y="391.5" font-size="12" fill="#000" font-weight="normal" text-anchor="end" textLength="21.4" lengthAdjust="spacingAndGlyphs" >Hora</text>
<text x="969.8" y="391.5" font-size="12" fill="#000" font-weight="bold" text-anchor="start" textLength="32.4" lengthAdjust="spacingAndGlyphs" >11:37</text>
<text x="955.2" y="405" font-size="12" fill="#000" font-weight="normal" text-anchor="end" textLength="29.6" lengthAdjust="spacingAndGlyphs" >Lineas</text>
<text x="969.8" y="405" font-size="12" fill="#000" font-weight="bold" text-anchor="start" textLength="20.3" lengthAdjust="spacingAndGlyphs" >200</text>
<text x="953.4" y="417.8" font-size="12" fill="#000" font-weight="normal" text-anchor="end" textLength="43.8" lengthAdjust="spacingAndGlyphs" >Dirección</text>
<text x="969.8" y="417.8" font-size="12" fill="#000" font-weight="bold" text-anchor="start" textLength="41.3" lengthAdjust="spacingAndGlyphs" >Vertical</text>
<path d="M913,444.5 H906.5 V727.5 H1138.5 V444.5 H950" fill="none" stroke="#dcdcdc" stroke-width="1"/>
<text x="915" y="449" font-size="12" fill="#000" font-weight="normal" text-anchor="start" textLength="33" lengthAdjust="spacingAndGlyphs" >Puntos</text>
<rect x="909" y="454" width="227" height="272" fill="#ababab" />
</svg></body></html>
